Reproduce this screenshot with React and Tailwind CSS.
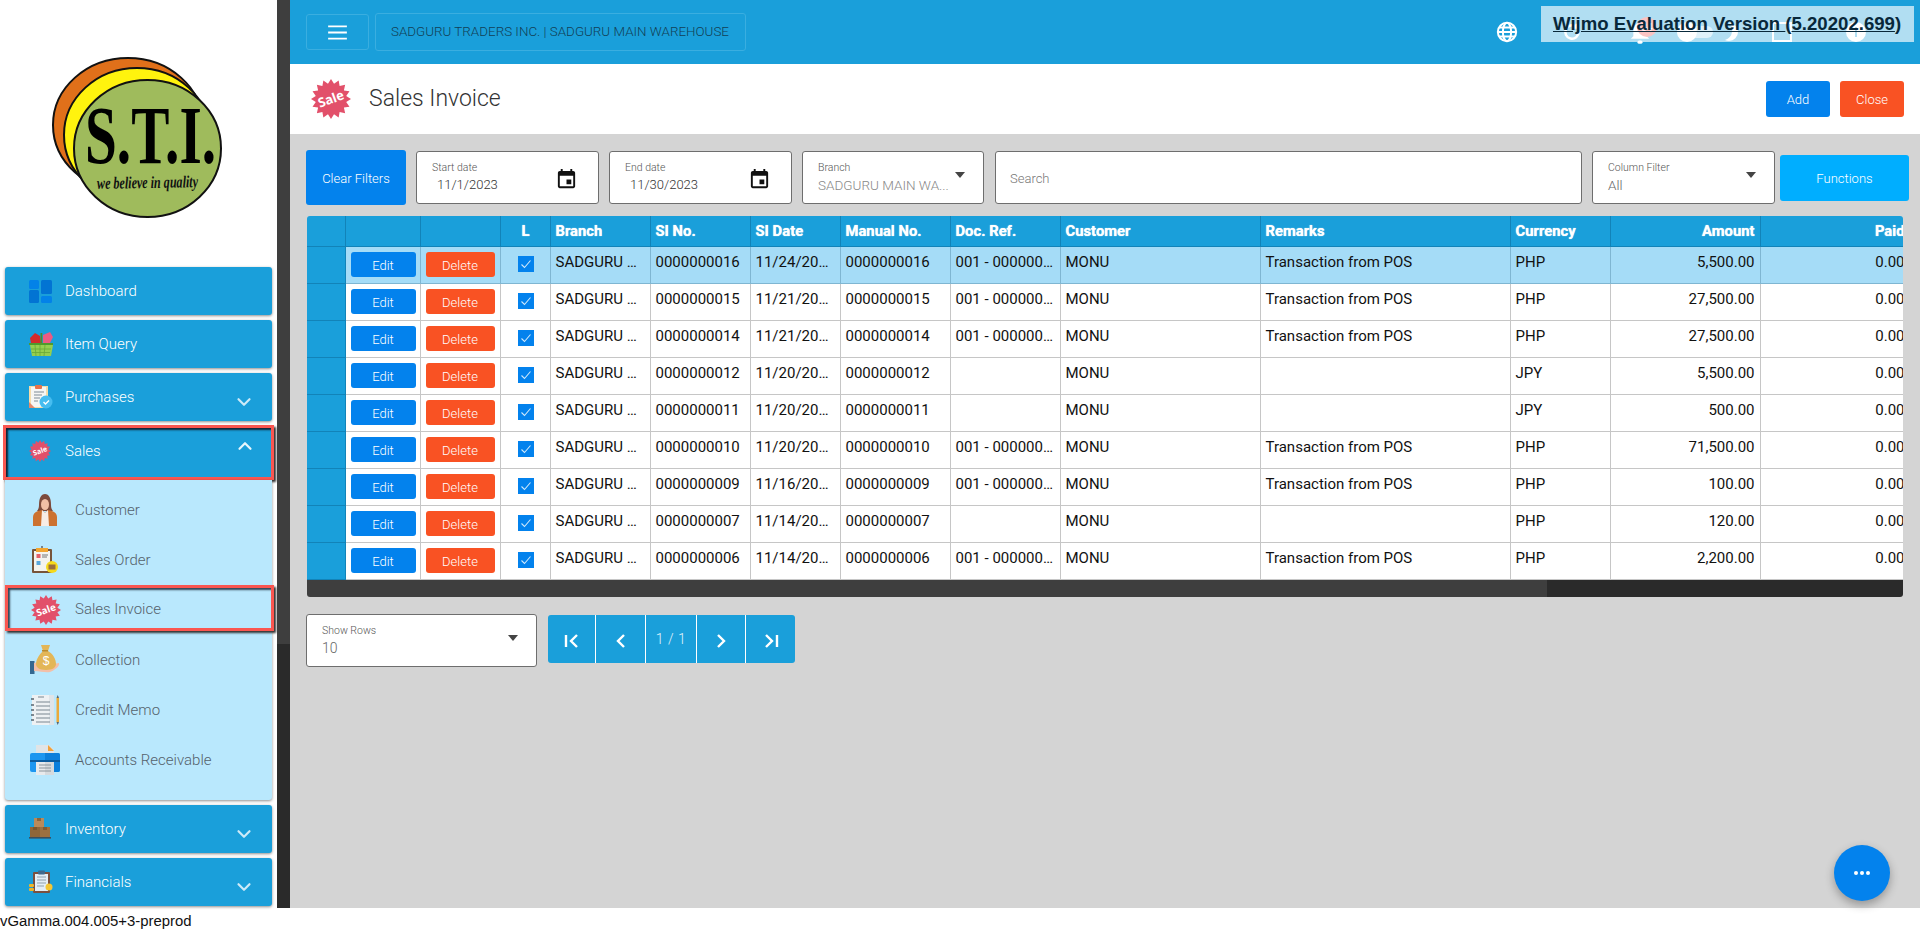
import React from "react";
import { ChevronDown, ChevronUp } from "lucide-react";

const starPoints = (cx, cy, R, r, n) => {
  const p = [];
  for (let i = 0; i < n * 2; i++) {
    const a = (Math.PI * i) / n - Math.PI / 2;
    const d = i % 2 ? r : R;
    p.push(`${(cx + d * Math.cos(a)).toFixed(2)},${(cy + d * Math.sin(a)).toFixed(2)}`);
  }
  return p.join(" ");
};

const SaleIcon = ({ className }) => (
  <svg viewBox="0 0 40 40" className={className}>
    <polygon points={starPoints(20, 20, 20, 15.5, 16)} fill="#e2506a" />
    <text x="20" y="24.5" textAnchor="middle" fontSize="13" fontWeight="700" fill="#fff" fontFamily="Open Sans, sans-serif" transform="rotate(-20 20 20)">Sale</text>
  </svg>
);

const DashboardIcon = () => (
  <svg viewBox="0 0 23 23" className="w-[23px] h-[23px]">
    <rect x="0" y="0" width="10" height="9" rx="1.5" fill="#0382e8" />
    <rect x="0" y="10" width="10" height="13" rx="1.5" fill="#0274d3" />
    <rect x="12" y="0" width="11" height="14" rx="1.5" fill="#0274d3" />
    <rect x="12" y="16" width="11" height="7" rx="1.5" fill="#0382e8" />
  </svg>
);

const BasketIcon = () => (
  <svg viewBox="0 0 24 24" className="w-[24px] h-[24px]">
    <path d="M6 1l5 3 1 7H2L1 6z" fill="#d42a2a" />
    <path d="M14 3l7-3 3 5-3 6h-7z" fill="#ec5a82" />
    <rect x="11.5" y="1" width="1.8" height="10" fill="#4e8a2a" />
    <path d="M0 11h24v2l-2 11H3L1 13H0z" fill="#95cf4e" />
    <path d="M0 11h24v2H0z" fill="#4f9a2b" />
    <path d="M6 13l1 11M11 13v11M16 13l-1 11M2 17h20M3 20.5h18" stroke="#6aa737" strokeWidth="0.8" fill="none" />
  </svg>
);

const PurchaseIcon = () => (
  <svg viewBox="0 0 24 24" className="w-[24px] h-[24px]">
    <rect x="0" y="1" width="19" height="22" fill="#f6dca8" />
    <rect x="2" y="2" width="15" height="20" fill="#f6f6f4" />
    <rect x="6" y="0" width="7" height="4" rx="1" fill="#e8734a" />
    <path d="M5 7h10M5 10h8M5 13h6M5 16h4" stroke="#7e8b96" strokeWidth="1" />
    <path d="M0 17l6 6H0z" fill="#e58a6b" />
    <circle cx="17" cy="17" r="6.5" fill="#46bdf0" />
    <path d="M14.5 17l2 2 3.5-3.5" stroke="#fff" strokeWidth="1.4" fill="none" />
  </svg>
);

const CustomerIcon = () => (
  <svg viewBox="0 0 24 32" className="w-[24px] h-[32px]">
    <path d="M6 11C6 4 8 0 12 0s6 4 6 11c0 3 1 5 2 6H4c1-1 2-3 2-6z" fill="#7c4a3c" />
    <ellipse cx="12" cy="10.5" rx="4" ry="5.5" fill="#f1bfa6" />
    <path d="M0 32V23c0-3 2-5 5-6l4-1 3 3 3-3 4 1c3 1 5 3 5 6v9z" fill="#cc7230" />
    <path d="M9 16l3 3 3-3 1 16H8z" fill="#f7ede6" />
  </svg>
);

const OrderIcon = () => (
  <svg viewBox="0 0 26 28" className="w-[26px] h-[28px]">
    <rect x="0" y="3" width="20" height="24" rx="1" fill="#77543a" />
    <rect x="2" y="5" width="16" height="20" fill="#f4f3ee" />
    <rect x="4" y="2" width="12" height="4" fill="#f3a530" />
    <rect x="9" y="0" width="2" height="2" fill="#77838f" />
    <rect x="4.5" y="8" width="4" height="4" fill="#e2606a" />
    <rect x="4.5" y="15" width="4" height="4" fill="#5aa7dc" />
    <path d="M10 9h6M10 11h5" stroke="#777" strokeWidth="1" />
    <circle cx="20" cy="21" r="6" fill="#f6d91c" />
    <rect x="16.5" y="18.5" width="7" height="5" fill="#9a6d3d" />
  </svg>
);

const BagIcon = () => (
  <svg viewBox="0 0 30 30" className="w-[30px] h-[30px]">
    <rect x="0" y="16" width="4.5" height="13" fill="#35678f" />
    <path d="M4 18c5-1 8 3 13 2l12-2c1 3-4 7-9 9-5 1-9-1-16-1z" fill="#f3bfa8" />
    <path d="M11 0h9l-2 6c5 3 8 8 8 13 0 3-3 6-10 6S6 22 6 19c0-5 4-10 7-13z" fill="#e3b657" />
    <rect x="12" y="5" width="6" height="1.5" fill="#b98a30" />
    <text x="16" y="20" textAnchor="middle" fontSize="12" fill="#fff" fontFamily="Liberation Sans, sans-serif">$</text>
  </svg>
);

const MemoIcon = () => (
  <svg viewBox="0 0 28 30" className="w-[28px] h-[30px]">
    <rect x="1" y="0" width="22" height="30" fill="#eef1f3" />
    <rect x="18" y="0" width="5" height="30" fill="#dfe4e8" />
    <path d="M7 2h6M5 7h14M5 11h14M5 15h14M5 19h14M5 23h14M5 27h14" stroke="#7b8791" strokeWidth="1.2" />
    <path d="M0 4h3M0 10h3M0 15h3M0 20h3M0 25h3" stroke="#58646f" strokeWidth="1.6" />
    <rect x="25.5" y="3" width="2.5" height="24" fill="#eaa93a" />
    <path d="M25.5 3l1.2-3 1.3 3zM25.5 27l1.2 3 1.3-3z" fill="#5a636b" />
  </svg>
);

const PrinterIcon = () => (
  <svg viewBox="0 0 30 30" className="w-[30px] h-[30px]">
    <path d="M6 0h13l5 5v9H6z" fill="#e1e4e6" />
    <path d="M18 0l6 6h-6z" fill="#f1a13a" />
    <path d="M2 8h26a2 2 0 012 2v15a2 2 0 01-2 2H2a2 2 0 01-2-2V10a2 2 0 012-2z" fill="#1c96f0" />
    <path d="M15 8h13a2 2 0 012 2v15a2 2 0 01-2 2H15z" fill="#0b7fdb" />
    <rect x="0" y="15" width="30" height="2" fill="#0b5c9f" />
    <rect x="6" y="17" width="18" height="13" fill="#e8eaec" />
    <rect x="15" y="17" width="9" height="13" fill="#d6dadd" />
    <path d="M9 20h12M9 23h12M9 26h12" stroke="#8a949b" strokeWidth="1" />
  </svg>
);

const BoxesIcon = () => (
  <svg viewBox="0 0 22 22" className="w-[22px] h-[22px]">
    <rect x="5" y="0" width="10" height="9" fill="#b98a5a" />
    <rect x="1" y="9" width="10" height="10" fill="#8f6638" />
    <rect x="11" y="9" width="10" height="10" fill="#9c7040" />
    <rect x="0" y="19" width="22" height="1.6" fill="#3a4f5e" />
    <path d="M8 0h4v3H8zM4 9h4v3H4zM14 9h4v3h-4z" fill="#6d4c2a" opacity=".6" />
  </svg>
);

const FinanceIcon = () => (
  <svg viewBox="0 0 24 24" className="w-[24px] h-[24px]">
    <rect x="4" y="2" width="17" height="21" rx="1" fill="#7a5040" />
    <rect x="6" y="4" width="13" height="17" fill="#e4eef6" />
    <rect x="9" y="0.5" width="7" height="4" rx="1" fill="#3f6a8e" />
    <path d="M8 7h9M8 10h9M8 13h9M8 16h7" stroke="#8fa0ad" strokeWidth="1" />
    <circle cx="20" cy="17" r="3.5" fill="#f4c634" />
    <rect x="0" y="14" width="5" height="3" rx="1" fill="#eeb52a" />
    <rect x="0" y="18" width="5" height="3" rx="1" fill="#eeb52a" />
  </svg>
);

const CalendarIcon = () => (
  <svg viewBox="0 0 24 24" className="w-[23px] h-[23px]" fill="#111">
    <path d="M17 12h-5v5h5v-5zM16 1v2H8V1H6v2H5c-1.11 0-1.99.9-1.99 2L3 19c0 1.1.89 2 2 2h14c1.1 0 2-.9 2-2V5c0-1.1-.9-2-2-2h-1V1h-2zm3 18H5V8h14v11z" />
  </svg>
);

const Caret = () => <span className="w-0 h-0 border-l-[5px] border-r-[5px] border-t-[6px] border-l-transparent border-r-transparent border-t-[#444]" />;

const NavItem = ({ icon, label, chevron }) => (
  <div className="mx-[5px] mb-[5px] h-[48px] w-[267px] shrink-0 rounded-[3px] bg-[#1a9fda] shadow-[0_1px_3px_rgba(0,0,0,0.45)] flex items-center text-white text-[15px] font-light">
    <span className="w-[60px] pl-[24px] shrink-0 flex items-center">{icon}</span>
    <span>{label}</span>
    {chevron && <ChevronDown className="ml-auto mr-[17px] mt-[10px] w-[22px] h-[22px] text-[#cdeaf7]" strokeWidth={2.4} />}
  </div>
);

const SubItem = ({ icon, label }) => (
  <div className="h-[50px] flex items-center text-[15px] font-light text-[#55626c]">
    <span className="w-[70px] shrink-0 flex justify-center pl-[11px] pr-[1px]">{icon}</span>
    <span>{label}</span>
  </div>
);

const Sidebar = () => (
  <aside className="w-[277px] shrink-0 bg-white flex flex-col">
    <div className="h-[267px] shrink-0">
      <svg viewBox="0 0 277 267" className="w-[277px] h-[267px]">
        <ellipse cx="128" cy="125" rx="75" ry="67" fill="#e0701a" stroke="#111" strokeWidth="2" />
        <ellipse cx="137" cy="135" rx="73" ry="67" fill="#fff30e" stroke="#111" strokeWidth="2" />
        <ellipse cx="147.5" cy="148.5" rx="73.5" ry="68.5" fill="#9fbb5c" stroke="#111" strokeWidth="2" />
        <text x="85" y="163" textLength="131" lengthAdjust="spacingAndGlyphs" fontSize="82" fontWeight="700" fill="#000" fontFamily="Liberation Serif, serif">S.T.I.</text>
        <text x="97" y="188" textLength="101" lengthAdjust="spacingAndGlyphs" fontSize="17" fontWeight="700" fontStyle="italic" fill="#111" fontFamily="Liberation Serif, serif" transform="rotate(-1 147 183)">we believe in quality</text>
      </svg>
    </div>
    <NavItem icon={<DashboardIcon />} label="Dashboard" />
    <NavItem icon={<BasketIcon />} label="Item Query" />
    <NavItem icon={<PurchaseIcon />} label="Purchases" chevron />
    <div className="ml-[3px] -mt-px w-[271px] h-[55px] shrink-0 border-[3px] border-[#fa5650] bg-[#1a9fda] pb-[3px] shadow-[inset_2px_2px_2px_#123,2px_2px_2px_#333] flex items-center text-white text-[15px] font-light">
      <span className="w-[59px] pl-[23px] shrink-0 flex"><SaleIcon className="w-[22px] h-[22px]" /></span>
      <span>Sales</span>
      <ChevronUp className="ml-auto mr-[15px] mb-[10px] w-[22px] h-[22px] text-[#e6f6fc]" strokeWidth={2.4} />
    </div>
    <div className="ml-[5px] w-[267px] h-[320px] shrink-0 pt-[5px] rounded-b-[3px] bg-[#b9e8fd] shadow-[0_1px_3px_rgba(0,0,0,0.45)] flex flex-col">
      <SubItem icon={<CustomerIcon />} label="Customer" />
      <SubItem icon={<OrderIcon />} label="Sales Order" />
      <div className="w-[269px] h-[46px] mb-[4px] border-[3px] border-[#fa5650] shadow-[inset_2px_2px_2px_#345,2px_2px_2px_#333] flex items-center pt-[3px] text-[15px] font-light text-[#55626c]">
        <span className="w-[67px] pl-[23px] shrink-0 flex"><SaleIcon className="w-[30px] h-[30px]" /></span>
        <span>Sales Invoice</span>
      </div>
      <SubItem icon={<BagIcon />} label="Collection" />
      <SubItem icon={<MemoIcon />} label="Credit Memo" />
      <SubItem icon={<PrinterIcon />} label="Accounts Receivable" />
    </div>
    <div className="h-[5px] shrink-0" />
    <NavItem icon={<BoxesIcon />} label="Inventory" chevron />
    <NavItem icon={<FinanceIcon />} label="Financials" chevron />
  </aside>
);

const Header = () => (
  <header className="relative h-[64px] shrink-0 bg-[#1a9fda] flex items-center pl-[16px] pr-[54px]">
    <button className="w-[63px] h-[36px] rounded-[3px] border border-[#3aaee0] flex items-center justify-center">
      <svg viewBox="0 0 20 16" className="w-[19px] h-[15px]"><path d="M0 1.5h20M0 8h20M0 14.5h20" stroke="#fff" strokeWidth="2" /></svg>
    </button>
    <div className="ml-[6px] w-[371px] h-[38px] rounded-[3px] border border-[#3aaee0] flex items-center pl-[15px] text-[13.4px] font-light text-[#123f57]">SADGURU TRADERS INC. | SADGURU MAIN WAREHOUSE</div>
    <div className="ml-auto flex items-center text-white">
      <svg viewBox="0 0 24 24" className="w-[22px] h-[22px]" fill="none" stroke="#fff" strokeWidth="2.2"><circle cx="12" cy="12" r="10" /><ellipse cx="12" cy="12" rx="4.5" ry="10" /><path d="M2 12h20M3.5 7h17M3.5 17h17" /></svg>
      <svg viewBox="0 0 24 24" className="ml-[44px] w-[20px] h-[20px]" fill="none" stroke="#fff" strokeWidth="3"><path d="M20 12a8 8 0 11-3-6.2" /><path d="M17 2v5h-5" strokeWidth="2" /></svg>
      <span className="relative ml-[48px] w-[20px] h-[24px] flex">
        <svg viewBox="0 0 24 28" className="w-[22px] h-[26px]" fill="#fff"><path d="M12 2a8 8 0 018 8v8l3 3H1l3-3v-8a8 8 0 018-8z" /><rect x="9" y="23" width="6" height="4" rx="2" /></svg>
        <span className="absolute left-[7px] -top-[3px] w-[20px] h-[20px] rounded-full bg-[#ef4f4f] text-[10px] text-white flex items-center justify-center">34</span>
      </span>
      <span className="relative ml-[27px] w-[36px] h-[20px] flex items-center">
        <span className="w-full h-[12px] rounded-full bg-white/60" />
        <span className="absolute left-0 w-[20px] h-[20px] rounded-full bg-white" />
      </span>
      <svg viewBox="0 0 20 20" className="ml-[10px] w-[20px] h-[20px]" fill="#fff"><path d="M6 1a9 9 0 010 18 10 10 0 01-4-1 10 10 0 007-8 9 9 0 00-3-9z" /></svg>
      <span className="ml-[29px] w-[20px] h-[20px] border-2 border-white" />
      <svg viewBox="0 0 20 20" className="ml-[54px] w-[20px] h-[20px]" fill="#fff"><circle cx="10" cy="10" r="10" /><rect x="9" y="8" width="2" height="7" fill="#1a9fda" /><rect x="9" y="5" width="2" height="2" fill="#1a9fda" /></svg>
    </div>
    <div className="absolute left-[1251px] top-[6px] w-[373px] h-[36px] bg-white/[0.66] flex items-center pl-[12px] font-['Liberation_Sans',sans-serif] font-bold text-[18.6px] whitespace-pre text-[#08283a]">
      <span className="underline">Wijmo Evaluation Version </span><span>(</span><span className="underline">5.20202.699</span><span>)</span>
    </div>
  </header>
);

const PageHead = () => (
  <div className="h-[70px] shrink-0 bg-white flex items-center pl-[21px] pr-[16px]">
    <SaleIcon className="w-[40px] h-[40px]" />
    <h1 className="ml-[18px] text-[23px] font-light text-[#333]">Sales Invoice</h1>
    <button className="ml-auto w-[64px] h-[36px] pt-[2px] rounded-[3px] bg-[#0382ed] text-white text-[13px] font-light">Add</button>
    <button className="ml-[10px] w-[64px] h-[36px] pt-[2px] rounded-[3px] bg-[#f95223] text-white text-[13px] font-light">Close</button>
  </div>
);

const Field = ({ label, value, w, valueClass, right }) => (
  <div className={`relative h-[53px] shrink-0 bg-white border border-[#6e6e6e] rounded-[3px] flex items-center ${w}`}>
    <div className="pl-[15px] flex-1 min-w-0">
      <div className="text-[10.5px] leading-[14px] font-light text-[#555]">{label}</div>
      <div className={`whitespace-nowrap leading-[20px] font-light ${valueClass}`}>{value}</div>
    </div>
    {right}
  </div>
);

const Filters = () => (
  <div className="mt-[16px] ml-[16px] flex items-center h-[55px]">
    <button className="w-[100px] h-[55px] pt-[2px] shrink-0 rounded-[3px] bg-[#0382ed] text-white text-[13px] font-light">Clear Filters</button>
    <div className="ml-[10px]"><Field w="w-[183px]" label="Start date" value="11/1/2023" valueClass="pl-[5px] text-[13px] text-[#333]" right={<span className="mr-[20px] mt-[3px]"><CalendarIcon /></span>} /></div>
    <div className="ml-[10px]"><Field w="w-[183px]" label="End date" value="11/30/2023" valueClass="pl-[5px] text-[13px] text-[#333]" right={<span className="mr-[20px] mt-[3px]"><CalendarIcon /></span>} /></div>
    <div className="ml-[10px]"><Field w="w-[182px]" label="Branch" value="SADGURU MAIN WA..." valueClass="text-[13.5px] text-[#888]" right={<span className="mr-[18px] mb-[6px] flex"><Caret /></span>} /></div>
    <div className="ml-[11px] w-[587px] h-[53px] pt-[2px] shrink-0 bg-white border border-[#6e6e6e] rounded-[3px] flex items-center pl-[14px] text-[13px] font-light text-[#777]">Search</div>
    <div className="ml-[10px]"><Field w="w-[183px]" label="Column Filter" value="All" valueClass="text-[13.5px] text-[#666]" right={<span className="mr-[18px] mb-[6px] flex"><Caret /></span>} /></div>
    <button className="ml-[5px] w-[129px] h-[46px] pt-[2px] shrink-0 rounded-[3px] bg-[#00aeff] text-white text-[13px] font-light">Functions</button>
  </div>
);

const rows = [
  ["0000000016", "11/24/20…", true, "PHP", "5,500.00"],
  ["0000000015", "11/21/20…", true, "PHP", "27,500.00"],
  ["0000000014", "11/21/20…", true, "PHP", "27,500.00"],
  ["0000000012", "11/20/20…", false, "JPY", "5,500.00"],
  ["0000000011", "11/20/20…", false, "JPY", "500.00"],
  ["0000000010", "11/20/20…", true, "PHP", "71,500.00"],
  ["0000000009", "11/16/20…", true, "PHP", "100.00"],
  ["0000000007", "11/14/20…", false, "PHP", "120.00"],
  ["0000000006", "11/14/20…", true, "PHP", "2,200.00"],
];

const HCell = ({ w, children, right, center }) => (
  <div className={`${w} shrink-0 h-full border-r border-[#1283b8] px-[5px] flex items-center font-bold text-[14.8px] text-white [text-shadow:0_0_1px_#fff] ${right ? "justify-end" : ""} ${center ? "justify-center pl-[6px]" : ""}`}>{children}</div>
);

const Cell = ({ w, children, right, sel }) => (
  <div className={`${w} shrink-0 h-full border-r ${sel ? "border-[#7fb6d2]" : "border-[#c6c6c6]"} px-[5px] pt-[3.5px] text-[15px] leading-[22px] text-[#111] whitespace-nowrap ${right ? "text-right" : ""}`}>{children}</div>
);

const Table = () => (
  <div className="mt-[11px] ml-[17px] w-[1596px] rounded-[3px] overflow-hidden">
    <div className="w-[1604px] h-[31px] bg-[#1a9fda] flex border-b border-[#1283b8]">
      <HCell w="w-[38.5px]" />
      <HCell w="w-[75px]" />
      <HCell w="w-[80px]" />
      <HCell w="w-[50px]" center>L</HCell>
      <HCell w="w-[100px]">Branch</HCell>
      <HCell w="w-[100px]">SI No.</HCell>
      <HCell w="w-[90px]">SI Date</HCell>
      <HCell w="w-[110px]">Manual No.</HCell>
      <HCell w="w-[110px]">Doc. Ref.</HCell>
      <HCell w="w-[200px]">Customer</HCell>
      <HCell w="w-[250px]">Remarks</HCell>
      <HCell w="w-[100px]">Currency</HCell>
      <HCell w="w-[150px]" right>Amount</HCell>
      <HCell w="w-[150px]" right>Paid</HCell>
    </div>
    {rows.map((r, i) => {
      const sel = i === 0;
      return (
        <div key={r[0]} className={`w-[1604px] h-[37px] flex border-b ${sel ? "bg-[#a5dcf7] border-[#7fb6d2]" : "bg-white border-[#c6c6c6]"}`}>
          <div className="w-[38.5px] shrink-0 h-[37px] bg-[#1a9fda] border-r border-b border-[#1283b8]" />
          <div className={`w-[75px] shrink-0 h-full border-r ${sel ? "border-[#7fb6d2]" : "border-[#c6c6c6]"} pl-[5px] pt-[5px]`}>
            <button className="w-[65px] h-[25px] pt-[2px] rounded-[3px] bg-[#0382ed] text-white text-[13px] font-light">Edit</button>
          </div>
          <div className={`w-[80px] shrink-0 h-full border-r ${sel ? "border-[#7fb6d2]" : "border-[#c6c6c6]"} pl-[5px] pt-[5px]`}>
            <button className="w-[69px] h-[25px] pt-[2px] rounded-[3px] bg-[#f95223] text-white text-[13px] font-light">Delete</button>
          </div>
          <div className={`w-[50px] shrink-0 h-full border-r ${sel ? "border-[#7fb6d2]" : "border-[#c6c6c6]"} flex justify-center pt-[9px] pl-[1px]`}>
            <span className="w-[16px] h-[16px] bg-[#0382ed] flex items-center justify-center">
              <svg viewBox="0 0 16 16" className="w-[16px] h-[16px]" fill="none" stroke="#cfe8fb" strokeWidth="1.1"><path d="M3.5 8.5l3 3 6-7" /></svg>
            </span>
          </div>
          <Cell w="w-[100px]" sel={sel}>SADGURU …</Cell>
          <Cell w="w-[100px]" sel={sel}>{r[0]}</Cell>
          <Cell w="w-[90px]" sel={sel}>{r[1]}</Cell>
          <Cell w="w-[110px]" sel={sel}>{r[0]}</Cell>
          <Cell w="w-[110px]" sel={sel}>{r[2] ? "001 - 000000…" : ""}</Cell>
          <Cell w="w-[200px]" sel={sel}>MONU</Cell>
          <Cell w="w-[250px]" sel={sel}>{r[2] ? "Transaction from POS" : ""}</Cell>
          <Cell w="w-[100px]" sel={sel}>{r[3]}</Cell>
          <Cell w="w-[150px]" sel={sel} right>{r[4]}</Cell>
          <Cell w="w-[150px]" sel={sel} right>0.00</Cell>
        </div>
      );
    })}
    <div className="h-[17px] flex">
      <div className="w-[1240px] bg-[#3e3e3e]" />
      <div className="flex-1 bg-[#2a2a2a]" />
    </div>
  </div>
);

const PageBtn = ({ children, w }) => (
  <div className={`${w} h-full border-r border-white last:border-r-0 flex items-center justify-center`}>{children}</div>
);

const Glyph = ({ d }) => (
  <svg viewBox="0 0 16 16" className="w-[16px] h-[16px] mt-[4px]" fill="none" stroke="#fff" strokeWidth="2.4"><path d={d} /></svg>
);

const Pager = () => (
  <div className="mt-[17px] ml-[16px] flex items-start">
    <div className="mr-[11px]">
      <Field w="w-[231px]" label="Show Rows" value="10" valueClass="text-[14px] text-[#666]" right={<span className="mr-[18px] mb-[6px] flex"><Caret /></span>} />
    </div>
    <div className="mt-[1px] w-[247px] h-[48px] rounded-[3px] bg-[#1a9fda] flex overflow-hidden">
      <PageBtn w="w-[48px]"><Glyph d="M2 2v12M13 2L7 8l6 6" /></PageBtn>
      <PageBtn w="w-[50px]"><Glyph d="M11 2L5 8l6 6" /></PageBtn>
      <PageBtn w="w-[51px]"><span className="text-[14px] font-light tracking-[0.5px] text-[#e2f3fb]">1 / 1</span></PageBtn>
      <PageBtn w="w-[49px]"><Glyph d="M5 2l6 6-6 6" /></PageBtn>
      <PageBtn w="w-[49px]"><Glyph d="M3 2l6 6-6 6M14 2v12" /></PageBtn>
    </div>
  </div>
);

export default function App() {
  return (
    <div className="w-[1920px] h-[931px] overflow-hidden flex flex-col bg-white font-['Roboto',sans-serif]">
      <div className="h-[908px] shrink-0 flex">
        <Sidebar />
        <div className="w-[13px] shrink-0 bg-[#2a2a2a]"><div className="h-[644px] bg-[#3e3e3e]" /></div>
        <main className="relative flex-1 min-w-0 bg-[#d4d4d4] flex flex-col">
          <Header />
          <PageHead />
          <Filters />
          <Table />
          <Pager />
          <button className="absolute right-[30px] bottom-[7px] w-[56px] h-[56px] rounded-full bg-[#0382ed] shadow-[0_4px_10px_rgba(0,0,0,0.3)] flex items-center justify-center gap-[2px]">
            <span className="w-[4px] h-[4px] rounded-full bg-white" />
            <span className="w-[4px] h-[4px] rounded-full bg-white" />
            <span className="w-[4px] h-[4px] rounded-full bg-white" />
          </button>
        </main>
      </div>
      <div className="h-[23px] pt-[3px] font-['Liberation_Sans',sans-serif] text-[14.9px] leading-[20px] text-[#111]">vGamma.004.005+3-preprod</div>
    </div>
  );
}
